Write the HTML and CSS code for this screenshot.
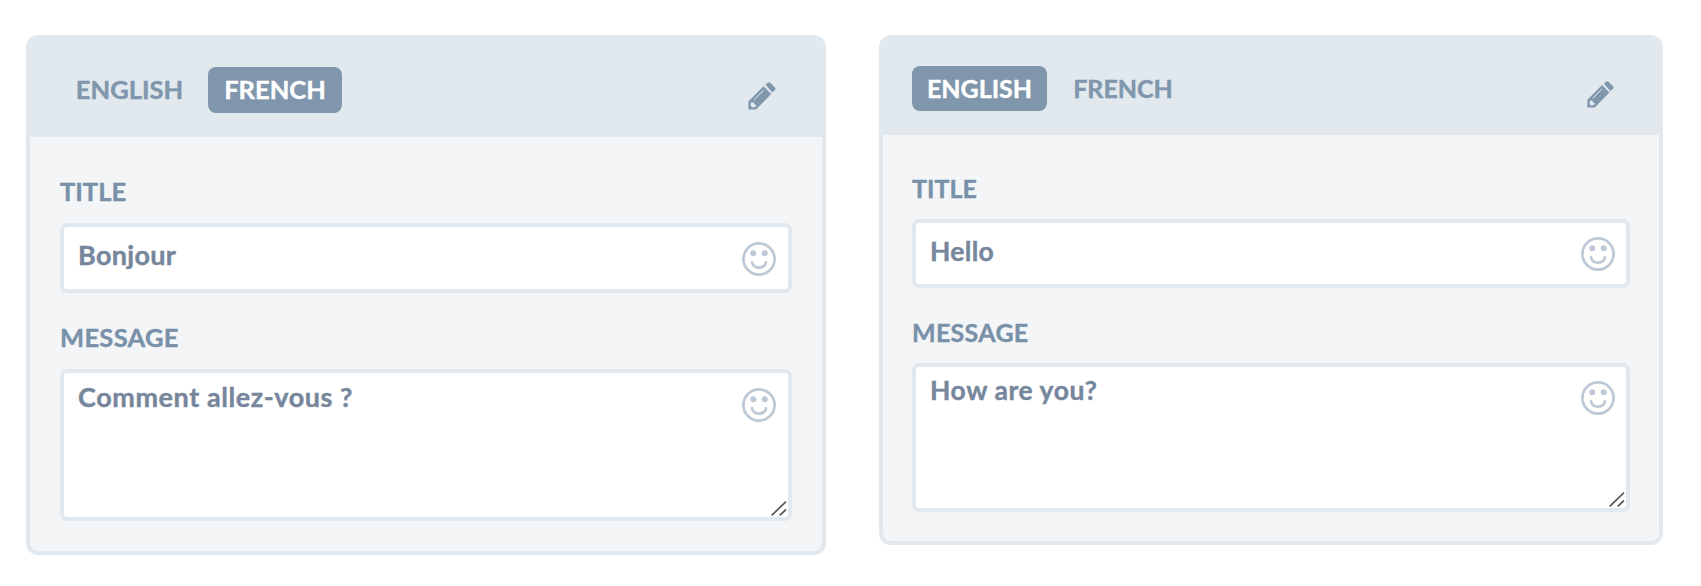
FILE: index.html
```
<!DOCTYPE html>
<html lang="en">
<head>
<meta charset="utf-8">
<title>Translations</title>
<link rel="stylesheet" href="styles.css">
</head>
<body>
<svg class="defs" width="0" height="0" aria-hidden="true">
  <symbol id="smile" viewBox="0 0 34 34">
    <circle cx="17" cy="17" r="15.6" fill="none" stroke="currentColor" stroke-width="2.7"/>
    <circle cx="11.3" cy="11.2" r="3" fill="currentColor"/>
    <circle cx="22.7" cy="11.2" r="3" fill="currentColor"/>
    <path d="M10 20.2C11.5 27.4 22.5 27.4 24 20.2" fill="none" stroke="currentColor" stroke-width="2.7" stroke-linecap="round"/>
  </symbol>
  <symbol id="pencil" viewBox="0 0 28 28">
    <path fill="currentColor" d="M17.6 2.8 19.8 .8Q21 -.2 22.2 .8L27 5.5Q28 6.8 27 8L24.3 10.6Z"/>
    <path fill="currentColor" fill-rule="evenodd" d="M15.6 4.2 23.2 12 8 27.6H.4V19.5ZM15.2 8 5.7 17.5 6.3 18.1 15.8 8.6ZM3 20.6 2.6 23.6 4.2 25.4 7.4 25 8.2 22.8 6.2 22.2 5.7 20.2Z"/>
  </symbol>
  <symbol id="grip" viewBox="0 0 16 15">
    <path d="M.7 14.3 15 .7M8.7 14.3 15 8.5" fill="none" stroke="#57575a" stroke-width="1.7"/>
  </symbol>
</svg>
<main class="panels">
  <section class="card card-french">
    <header class="card-header">
      <nav class="tabs">
        <span class="tab"><span class="t-english">ENGLISH</span></span>
        <span class="tab active"><span class="t-french">FRENCH</span></span>
      </nav>
      <svg class="pencil"><use href="#pencil"/></svg>
    </header>
    <div class="card-body">
      <div class="label t-title">TITLE</div>
      <div class="field input"><span class="value t-bonjour">Bonjour</span><svg class="smile"><use href="#smile"/></svg></div>
      <div class="label t-message">MESSAGE</div>
      <div class="field area"><span class="value t-comment">Comment allez-vous ?</span><svg class="smile"><use href="#smile"/></svg><svg class="grip"><use href="#grip"/></svg></div>
    </div>
  </section>
  <section class="card card-english">
    <header class="card-header">
      <nav class="tabs">
        <span class="tab active"><span class="t-english">ENGLISH</span></span>
        <span class="tab"><span class="t-french">FRENCH</span></span>
      </nav>
      <svg class="pencil"><use href="#pencil"/></svg>
    </header>
    <div class="card-body">
      <div class="label t-title">TITLE</div>
      <div class="field input"><span class="value t-hello">Hello</span><svg class="smile"><use href="#smile"/></svg></div>
      <div class="label t-message">MESSAGE</div>
      <div class="field area"><span class="value t-how">How are you?</span><svg class="smile"><use href="#smile"/></svg><svg class="grip"><use href="#grip"/></svg></div>
    </div>
  </section>
</main>
</body>
</html>
```
FILE: styles.css
```
* { box-sizing: border-box; }
body { margin: 0; background: #fff; font-family: Lato, "Open Sans", sans-serif; font-weight: 700; -webkit-text-stroke: 0.4px currentColor; }
.defs { position: absolute; }
.panels { display: flex; align-items: flex-start; gap: 53px; padding: 35px 0 0 26px; }
.card { border: 4px solid #e1e8ee; border-radius: 12px; background: #f3f5f7; overflow: hidden; flex: none; }
.card-french { width: 800px; height: 520px; }
.card-english { width: 784px; height: 510px; }
.card-header { display: flex; justify-content: space-between; align-items: flex-start; background: #e1e8ee; }
.card-french .card-header { height: 98px; padding: 28px 46px 0 30px; }
.card-english .card-header { height: 96px; padding: 27px 45px 0 29px; }
.tabs { display: flex; gap: 10px; }
.tab { display: flex; justify-content: center; align-items: center; padding-bottom: 2px; border-radius: 8px; color: #8096ac; font-size: 25.5px; line-height: 30px; white-space: nowrap; }
.card-french .tab { width: 134px; height: 46px; }
.card-french .tab:first-child { width: 138px; padding-left: 1px; }
.card-english .tab { width: 135px; height: 45px; font-size: 25px; }
.card-english .tab + .tab { width: 132px; }
.tab.active { background: #8096ac; color: #fff; }
.pencil { width: 28px; height: 28px; color: #8096ac; margin-top: 15px; }
.card-english .pencil { width: 27px; height: 27px; }
.card-body { display: flex; flex-direction: column; padding: 0 30px; }
.card-english .card-body { padding: 0 29px; }
.label { color: #7891a9; font-size: 25.5px; line-height: 30px; height: 30px; white-space: nowrap; }
.card-english .label { font-size: 25px; }
.card-french .t-title { margin: 39px 0 17px; }
.card-french .t-message { margin: 29px 0 17px; }
.card-english .t-title { margin: 38px 0 16px; }
.card-english .t-message { margin: 29px 0 16px; }
.t-message { letter-spacing: 0.3px; }
.t-bonjour, .t-hello { letter-spacing: 0.3px; }
.t-comment, .t-how { letter-spacing: 0.57px; }
.field { display: flex; justify-content: space-between; align-items: flex-start; position: relative; background: #fff; border: 4px solid #e1e8ee; border-radius: 7px; padding: 0 12px 0 14px; }
.card-french .input { height: 70px; }
.card-english .input { height: 69px; }
.card-french .area { height: 152px; }
.card-english .area { height: 149px; }
.value { color: #76869c; font-size: 27px; line-height: 32px; margin-top: 12px; white-space: nowrap; }
.card-english .value { font-size: 26.5px; }
.area .value { margin-top: 8px; }
.card-english .area .value { margin-top: 7px; }
.smile { width: 34px; height: 34px; margin-top: 15px; color: #bdc9d6; flex: none; }
.card-english .smile { margin-top: 14px; margin-right: -1px; }
.grip { position: absolute; right: 1px; bottom: 1px; width: 16px; height: 15px; }
```
